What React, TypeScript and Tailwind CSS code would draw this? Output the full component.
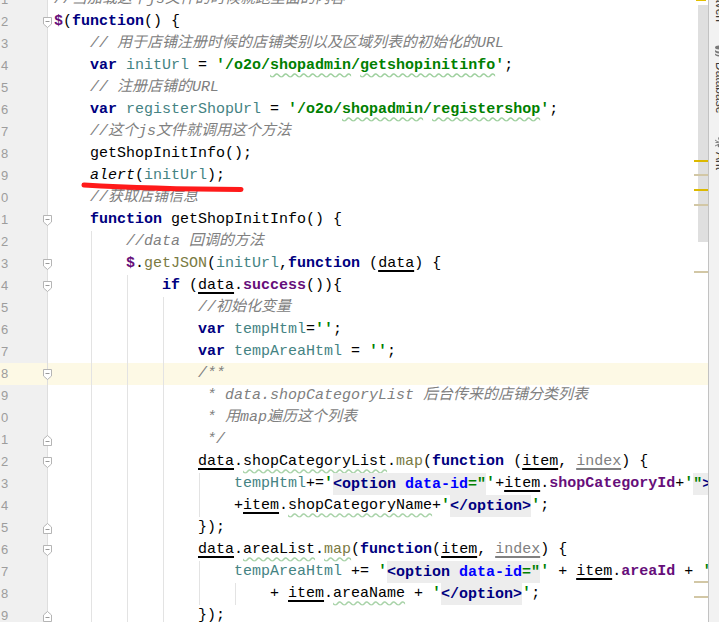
type Tok = [string, string];
type Line = { ind: number; g: number; f?: "s" | "e"; hl?: boolean; t: Tok[] };

// token styles, IntelliJ default light scheme
const P = "";
const KW = "font-bold text-[#000080]";
const ST = "font-bold text-[#008000]";
const STW = "font-bold text-[#008000] underline decoration-wavy decoration-[#9fd09f] underline-offset-[3px]";
const CM = "italic text-[#808080]";
const LV = "text-[#458383]";
const MF = "text-[#7a7a43]";
const MFW = "text-[#7a7a43] underline decoration-wavy decoration-[#a9d3a9] underline-offset-[3px]";
const FL = "font-bold text-[#660e7a]";
const PR = "underline decoration-[1.5px] underline-offset-[3px]";
const PRU = "text-[#808080] underline decoration-[#808080] decoration-[1.5px] underline-offset-[3px]";
const WV = "underline decoration-wavy decoration-[#a9d3a9] underline-offset-[3px]";
const GL = "italic";
const TAG = "bg-[#ededed] py-[2.5px] font-bold text-[#000080]";
const ATT = "bg-[#ededed] py-[2.5px] font-bold text-[#0000ff]";
const HS = "bg-[#ededed] py-[2.5px] font-bold text-[#008000]";
const HP = "bg-[#ededed] py-[2.5px]";

const lines: Line[] = [
  { ind: 0, g: 0, t: [[CM, "//当加载这个js文件的时候就跑里面的内容"]] },
  { ind: 0, g: 0, f: "s", t: [[FL, "$"], [P, "("], [KW, "function"], [P, "() {"]] },
  { ind: 4, g: 0, t: [[CM, "// 用于店铺注册时候的店铺类别以及区域列表的初始化的URL"]] },
  { ind: 4, g: 0, t: [[KW, "var"], [P, " "], [LV, "initUrl"], [P, " = "], [ST, "'/o2o/"], [STW, "shopadmin"], [ST, "/"], [STW, "getshopinitinfo"], [ST, "'"], [P, ";"]] },
  { ind: 4, g: 0, t: [[CM, "// 注册店铺的URL"]] },
  { ind: 4, g: 0, t: [[KW, "var"], [P, " "], [LV, "registerShopUrl"], [P, " = "], [ST, "'/o2o/"], [STW, "shopadmin"], [ST, "/"], [STW, "registershop"], [ST, "'"], [P, ";"]] },
  { ind: 4, g: 0, t: [[CM, "//这个js文件就调用这个方法"]] },
  { ind: 4, g: 0, t: [[P, "getShopInitInfo();"]] },
  { ind: 4, g: 0, t: [[GL, "alert"], [P, "("], [LV, "initUrl"], [P, ");"]] },
  { ind: 4, g: 0, t: [[CM, "//获取店铺信息"]] },
  { ind: 4, g: 0, f: "s", t: [[KW, "function"], [P, " getShopInitInfo() {"]] },
  { ind: 8, g: 1, t: [[CM, "//data 回调的方法"]] },
  { ind: 8, g: 1, f: "s", t: [[FL, "$"], [P, "."], [MF, "getJSON"], [P, "("], [LV, "initUrl"], [P, ","], [KW, "function"], [P, " ("], [PR, "data"], [P, ") {"]] },
  { ind: 12, g: 2, f: "s", t: [[KW, "if"], [P, " ("], [PR, "data"], [P, "."], [FL, "success"], [P, "()){"]] },
  { ind: 16, g: 3, t: [[CM, "//初始化变量"]] },
  { ind: 16, g: 3, t: [[KW, "var"], [P, " "], [LV, "tempHtml"], [P, "="], [ST, "''"], [P, ";"]] },
  { ind: 16, g: 3, t: [[KW, "var"], [P, " "], [LV, "tempAreaHtml"], [P, " = "], [ST, "''"], [P, ";"]] },
  { ind: 16, g: 3, f: "s", hl: true, t: [[CM, "/**"]] },
  { ind: 17, g: 3, t: [[CM, "* data.shopCategoryList 后台传来的店铺分类列表"]] },
  { ind: 17, g: 3, t: [[CM, "* 用map遍历这个列表"]] },
  { ind: 17, g: 3, f: "e", t: [[CM, "*/"]] },
  { ind: 16, g: 3, f: "s", t: [[PR, "data"], [P, "."], [WV, "shopCategoryList"], [P, "."], [MF, "map"], [P, "("], [KW, "function"], [P, " ("], [PR, "item"], [P, ", "], [PRU, "index"], [P, ") {"]] },
  { ind: 20, g: 4, t: [[LV, "tempHtml"], [P, "+="], [ST, "'"], [TAG, "<option"], [HP, " "], [ATT, "data-id"], [HS, '="'], [ST, "'"], [P, "+"], [PR, "item"], [P, "."], [FL, "shopCategoryId"], [P, "+"], [ST, "'"], [HS, '"'], [TAG, ">"], [ST, "'"]] },
  { ind: 20, g: 4, t: [[P, "+"], [PR, "item"], [P, "."], [WV, "shopCategoryName"], [P, "+"], [ST, "'"], [TAG, "</option>"], [ST, "'"], [P, ";"]] },
  { ind: 16, g: 3, f: "e", t: [[P, "});"]] },
  { ind: 16, g: 3, f: "s", t: [[PR, "data"], [P, "."], [WV, "areaList"], [P, "."], [MFW, "map"], [P, "("], [KW, "function"], [P, "("], [PR, "item"], [P, ", "], [PRU, "index"], [P, ") {"]] },
  { ind: 20, g: 4, t: [[LV, "tempAreaHtml"], [P, " += "], [ST, "'"], [TAG, "<option"], [HP, " "], [ATT, "data-id"], [HS, '="'], [ST, "'"], [P, " + "], [PR, "item"], [P, "."], [FL, "areaId"], [P, " + "], [ST, "'"], [HS, '"'], [TAG, ">"], [ST, "'"]] },
  { ind: 24, g: 5, t: [[P, "+ "], [PR, "item"], [P, "."], [WV, "areaName"], [P, " + "], [ST, "'"], [TAG, "</option>"], [ST, "'"], [P, ";"]] },
  { ind: 16, g: 3, f: "e", t: [[P, "});"]] },
];

function FoldMark({ end }: { end: boolean }) {
  return (
    <svg width="10" height="11" viewBox="0 0 10 11">
      {end ? (
        <>
          <path d="M0.5 10.5H8.5V4L4.5 0.5L0.5 4Z" fill="#fff" stroke="#b5b5b5" />
          <path d="M2.5 6.5H6.5" stroke="#9a9a9a" />
        </>
      ) : (
        <>
          <path d="M0.5 0.5H8.5V7L4.5 10.5L0.5 7Z" fill="#fff" stroke="#b5b5b5" />
          <path d="M2.5 4.5H6.5" stroke="#9a9a9a" />
        </>
      )}
    </svg>
  );
}

function Row({ n, line }: { n: number; line: Line }) {
  const lead = line.ind >= 4 ? 1 : 0;
  const rest = line.ind - lead * 4 - line.g * 4;
  return (
    <div className={`flex h-[22px] ${line.hl ? "bg-[#fdf9e5]" : ""}`}>
      <div
        className={`flex w-[43px] shrink-0 items-center pl-[1px] font-['Liberation_Sans',sans-serif] text-[13px] text-[#9d9d9d] ${
          line.hl ? "bg-[#fdf9e5]" : "bg-[#f0f0f0]"
        }`}
      >
        {n % 10}
      </div>
      <div
        className={`flex w-[10px] shrink-0 items-center ${
          line.hl
            ? "bg-[linear-gradient(to_right,#fdf9e5_4px,#dedede_4px,#dedede_5px,#fdf9e5_5px)]"
            : "bg-[linear-gradient(to_right,#f0f0f0_4px,#dedede_4px,#dedede_5px,#ffffff_5px)]"
        }`}
      >
        {line.f && <FoldMark end={line.f === "e"} />}
      </div>
      <div className="flex shrink-0 pl-[1px]">
        {lead === 1 && <span className="h-[22px] w-[36px] shrink-0" />}
        {Array.from({ length: line.g }).map((_, i) => (
          <span
            key={i}
            className="h-[22px] w-[36px] shrink-0 bg-[linear-gradient(to_right,transparent_1px,#e3e3e3_1px,#e3e3e3_2px,transparent_2px)]"
          />
        ))}
        <div className="whitespace-pre leading-[22px]">
          {" ".repeat(rest)}
          {line.t.map(([c, s], i) => (
            <span key={i} className={c}>
              {s}
            </span>
          ))}
        </div>
      </div>
    </div>
  );
}

function DbIcon() {
  return (
    <svg width="12" height="12" viewBox="0 0 12 12">
      <ellipse cx="6" cy="2.5" rx="5" ry="2" fill="#7a7a7a" />
      <path d="M1 4.5c0 1.1 2.2 2 5 2s5-.9 5-2v2c0 1.1-2.2 2-5 2s-5-.9-5-2z" fill="#7a7a7a" />
      <path d="M1 8c0 1.1 2.2 2 5 2s5-.9 5-2v1.5c0 1.1-2.2 2-5 2s-5-.9-5-2z" fill="#7a7a7a" />
    </svg>
  );
}

function AntIcon() {
  return (
    <svg width="12" height="12" viewBox="0 0 12 12">
      <circle cx="6" cy="2.5" r="1.8" fill="#777" />
      <ellipse cx="6" cy="6" rx="1.6" ry="1.6" fill="#777" />
      <ellipse cx="6" cy="9.5" rx="2.4" ry="2.2" fill="#777" />
      <path d="M1 4l3 2M11 4l-3 2M1 10l3-1.5M11 10l-3-1.5M1.5 6.5h3M10.5 6.5h-3" stroke="#777" strokeWidth="0.9" />
    </svg>
  );
}

export default function App() {
  return (
    <div className="relative flex h-[622px] w-[719px] overflow-hidden bg-white font-['Liberation_Mono','Noto_Sans_CJK_SC',monospace] text-[15px] text-black">
      <div className="w-[708px] shrink-0 overflow-hidden">
        <div className="-mt-[11px]">
          {lines.map((l, i) => (
            <Row key={i} n={i + 1} line={l} />
          ))}
        </div>
      </div>
      <div className="w-[1px] shrink-0 bg-[#c2c2c2]" />
      <div className="w-[10px] shrink-0 overflow-hidden bg-[#f2f2f2]">
        <div className="flex w-[21px] flex-col items-center font-['Liberation_Sans',sans-serif] text-[12px] text-[#3a3a3a]">
          <span className="-mt-[14px] [writing-mode:vertical-rl]">Maven</span>
          <div className="mt-[23px]">
            <DbIcon />
          </div>
          <span className="mt-[5px] [writing-mode:vertical-rl]">Database</span>
          <div className="mt-[23px]">
            <AntIcon />
          </div>
          <span className="mt-[4px] [writing-mode:vertical-rl]">Ant</span>
        </div>
      </div>

      {/* scrollbar thumb and error stripe marks */}
      <div className="absolute left-[698px] top-[5px] h-[237px] w-[10px] bg-[#dfdfdf]" />
      <div className="absolute left-[696px] top-0 h-[1px] w-[10px] bg-[#e2bf00]" />
      <div className="absolute left-[694px] top-[160px] h-[2px] w-[14px] bg-[#dcb900]" />
      <div className="absolute left-[694px] top-[174px] h-[2px] w-[14px] bg-[#d2c7a5]" />
      <div className="absolute left-[694px] top-[189px] h-[2px] w-[14px] bg-[#dcb900]" />
      <div className="absolute left-[694px] top-[204px] h-[2px] w-[14px] bg-[#d2c7a5]" />
      <div className="absolute left-[694px] top-[271px] h-[2px] w-[14px] bg-[#d2c7a5]" />
      <div className="absolute left-[694px] top-[581px] h-[2px] w-[14px] bg-[#d2c7a5]" />
      <div className="absolute left-[694px] top-[596px] h-[2px] w-[14px] bg-[#d2c7a5]" />

      {/* red hand-drawn underline under alert(initUrl) */}
      <svg className="pointer-events-none absolute left-[78px] top-[178px]" width="172" height="20" viewBox="0 0 172 20">
        <path d="M6 7 Q72 11 163 11.5" fill="none" stroke="#ff1a1a" strokeWidth="5" strokeLinecap="round" />
      </svg>
    </div>
  );
}
